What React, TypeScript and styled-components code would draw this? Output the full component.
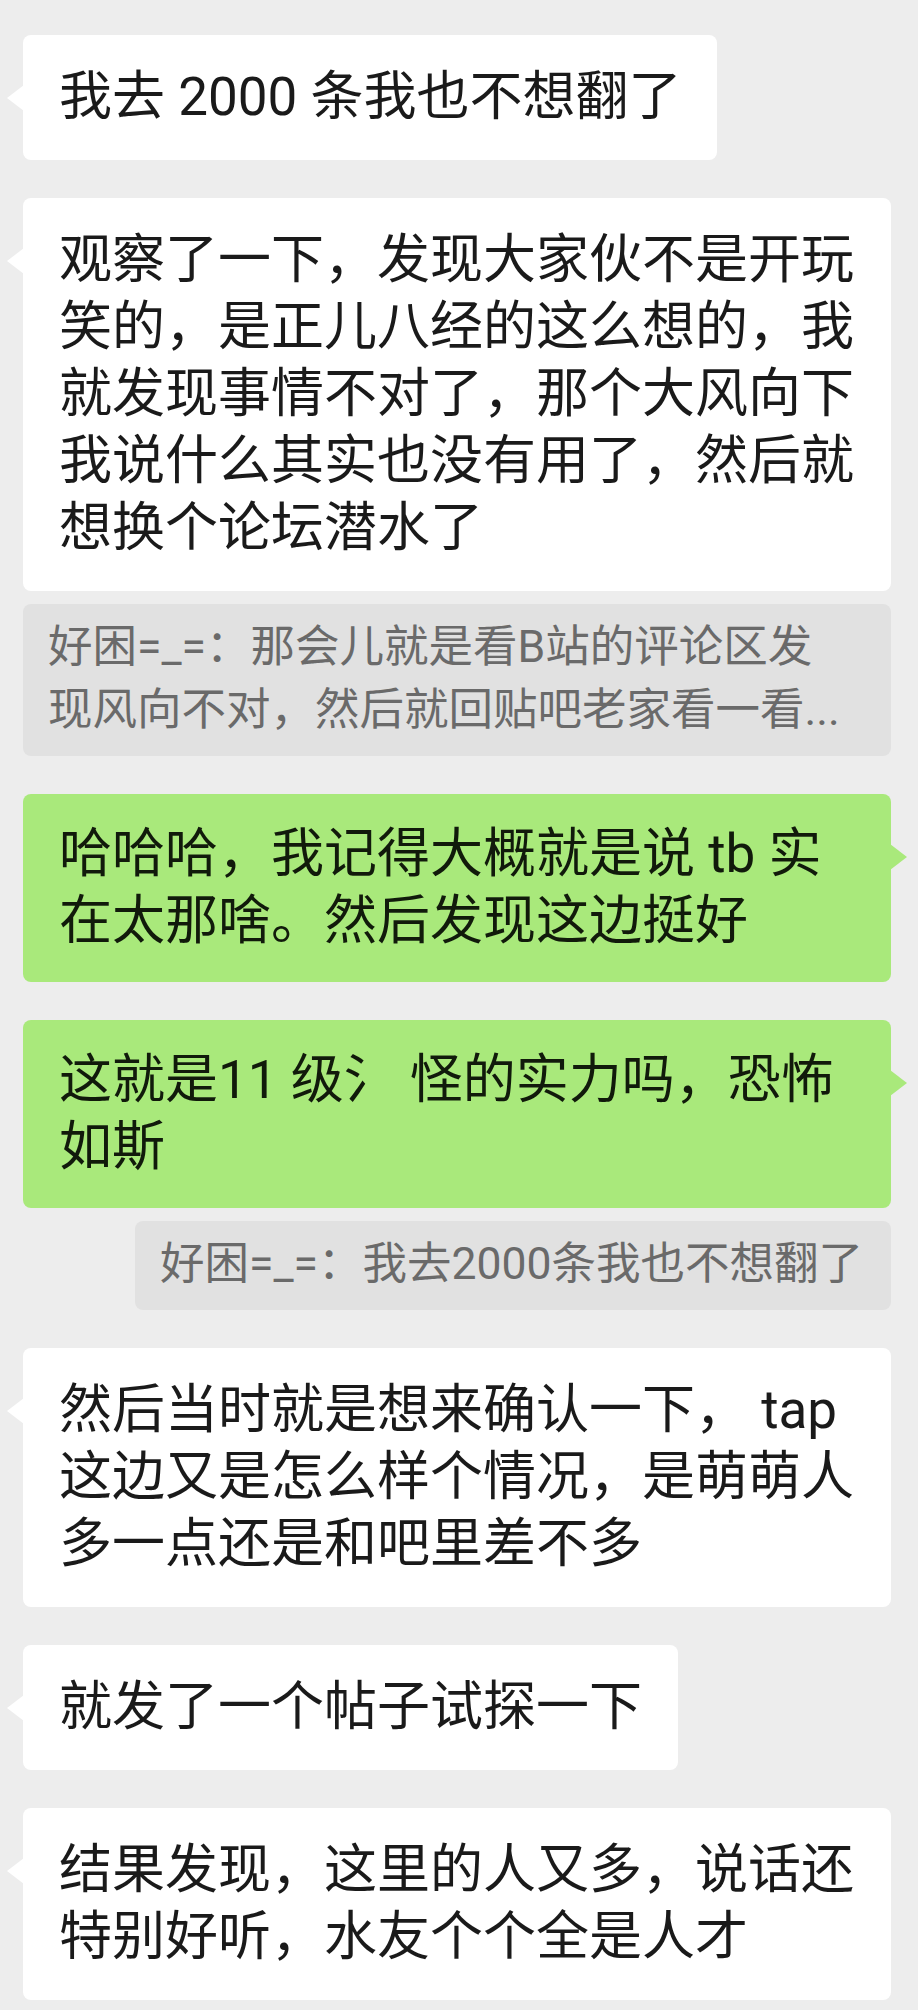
import styled, { createGlobalStyle } from "styled-components";

const GlobalStyle = createGlobalStyle`
    html, body {
        margin: 0;
        padding: 0;
        background: #ededed;
    }
    body {
        font-family: Roboto, "Noto Sans CJK SC", sans-serif;
        -webkit-font-smoothing: antialiased;
    }
`;

const Thread = styled.main`
    display: flex;
    flex-direction: column;
    padding: 35px 27px 12px 23px;
    min-height: 2010px;
    box-sizing: border-box;
`;

const Bubble = styled.div<{ $mine?: boolean }>`
    position: relative;
    align-self: ${p => p.$mine ? 'flex-end' : 'flex-start'};
    box-sizing: border-box;
    max-width: 100%;
    margin-top: 38px;
    padding: ${p => p.$mine ? '27px' : '29px'} 36px;
    border-radius: 8px;
    background: ${p => p.$mine ? '#a9e97b' : '#ffffff'};
    color: ${p => p.$mine ? '#111a0b' : '#1a1a1a'};
    font-size: 53px;
    line-height: 67px;

    &:first-child {
        margin-top: 0;
    }

    /* the little pointer next to the bubble */
    &::before {
        content: "";
        position: absolute;
        top: 50px;
        width: 17px;
        height: 26px;
        background: inherit;
        ${p => p.$mine
            ? 'right: -16px; clip-path: polygon(0 0, 100% 50%, 0 100%);'
            : 'left: -16px; clip-path: polygon(100% 0, 0 50%, 100% 100%);'}
    }
`;

const Quote = styled.div<{ $mine?: boolean }>`
    align-self: ${p => p.$mine ? 'flex-end' : 'stretch'};
    margin-top: 13px;
    padding: 12px ${p => p.$mine ? 28 : 40}px 14px 25px;
    border-radius: 8px;
    background: #e1e1e1;
    color: #6a6a6a;
    font-size: 44.5px;
    line-height: 63px;
    display: -webkit-box;
    -webkit-box-orient: vertical;
    -webkit-line-clamp: 2;
    overflow: hidden;
`;

type Item =
    | { kind: 'msg', mine?: boolean, text: string }
    | { kind: 'quote', mine?: boolean, text: string };

const items: Item[] = [
    { kind: 'msg', text: '我去 2000 条我也不想翻了' },
    { kind: 'msg', text: '观察了一下，发现大家伙不是开玩笑的，是正儿八经的这么想的，我就发现事情不对了，那个大风向下我说什么其实也没有用了，然后就想换个论坛潜水了' },
    { kind: 'quote', text: '好困=_=：那会儿就是看B站的评论区发现风向不对，然后就回贴吧老家看一看...' },
    { kind: 'msg', mine: true, text: '哈哈哈，我记得大概就是说 tb 实在太那啥。然后发现这边挺好' },
    { kind: 'msg', mine: true, text: '这就是11 级氵 怪的实力吗，恐怖如斯' },
    { kind: 'quote', mine: true, text: '好困=_=：我去2000条我也不想翻了' },
    { kind: 'msg', text: '然后当时就是想来确认一下， tap这边又是怎么样个情况，是萌萌人多一点还是和吧里差不多' },
    { kind: 'msg', text: '就发了一个帖子试探一下' },
    { kind: 'msg', text: '结果发现，这里的人又多，说话还特别好听，水友个个全是人才' },
];

export default function App() {
    return (
        <>
            <GlobalStyle />
            <Thread>
                {items.map((item, i) => item.kind === 'msg'
                    ? <Bubble key={i} $mine={item.mine}>{item.text}</Bubble>
                    : <Quote key={i} $mine={item.mine}>{item.text}</Quote>
                )}
            </Thread>
        </>
    );
}
